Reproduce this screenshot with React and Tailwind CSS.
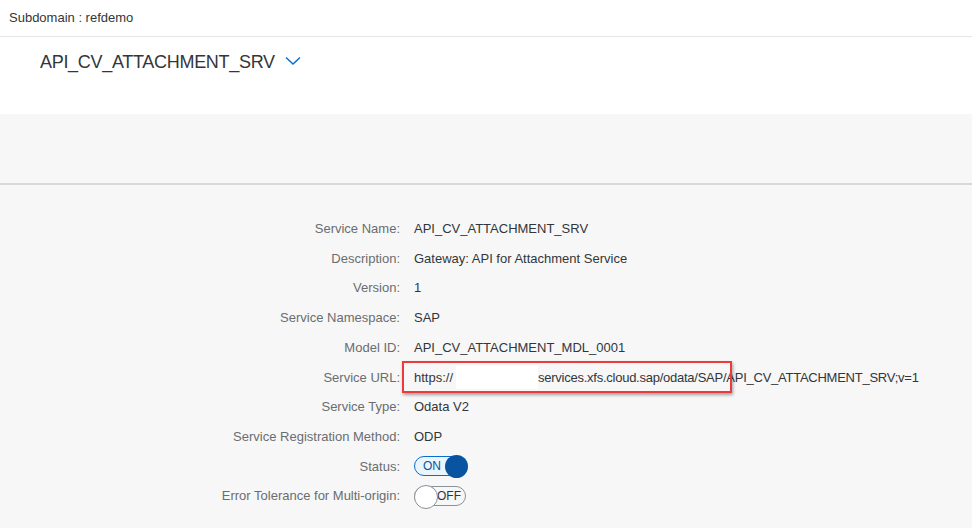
const rows = [
  { label: 'Service Name:', value: 'API_CV_ATTACHMENT_SRV' },
  { label: 'Description:', value: 'Gateway: API for Attachment Service' },
  { label: 'Version:', value: '1' },
  { label: 'Service Namespace:', value: 'SAP' },
  { label: 'Model ID:', value: 'API_CV_ATTACHMENT_MDL_0001' },
  { label: 'Service URL:', type: 'url' },
  { label: 'Service Type:', value: 'Odata V2' },
  { label: 'Service Registration Method:', value: 'ODP' },
  { label: 'Status:', type: 'on' },
  { label: 'Error Tolerance for Multi-origin:', type: 'off' },
];

const SwitchOn = () => (
  <div className="relative flex items-center w-[54px] h-[22px]">
    <div className="flex items-center w-[52px] h-[20px] rounded-full border border-[#0a6ed1] bg-[#ebf5fe] pl-[8px] text-[12px] text-[#0854a0]">
      ON
    </div>
    <div className="absolute right-0 top-0 w-[23px] h-[23px] rounded-full bg-[#0854a0]" />
  </div>
);

const SwitchOff = () => (
  <div className="relative flex items-center w-[54px] h-[23px]">
    <div className="flex items-center justify-end w-[52px] h-[20px] rounded-full border border-[#89919a] bg-[#f7f7f7] pr-[4px] text-[12px] text-[#32363a]">
      OFF
    </div>
    <div className="absolute left-0 top-0 w-[24px] h-[24px] rounded-full bg-white border border-[#89919a]" />
  </div>
);

const UrlValue = () => (
  <span className="relative flex items-center">
    <span>https://</span>
    <span className="inline-block w-[82px] h-[23px] bg-white ml-[3px]" />
    <span className="tracking-[-0.25px]">services.xfs.cloud.sap/odata/SAP/API_CV_ATTACHMENT_SRV;v=1</span>
    <span className="absolute left-[-12px] top-[-5px] w-[330px] h-[32px] border-2 border-[#ee3a3a] shadow-[1px_2px_3px_rgba(0,0,0,0.35)]" />
  </span>
);

export default function App() {
  return (
    <div
      className="w-[972px] h-[528px] overflow-hidden bg-[#f7f7f7] text-[#32363a]"
      style={{ fontFamily: '"Liberation Sans", Arial, sans-serif' }}
    >
      <div className="h-[37px] bg-white border-b border-[#e5e5e5] flex items-center px-[9px] text-[13px]">
        Subdomain : refdemo
      </div>
      <div className="h-[77px] bg-white flex items-start pl-[40px] pt-[12px]">
        <span className="text-[18px] tracking-[-0.3px]">API_CV_ATTACHMENT_SRV</span>
        <svg className="ml-[10px] mt-[7px]" width="16" height="10" viewBox="0 0 16 10">
          <path d="M1 1.5 L8 8 L15 1.5" fill="none" stroke="#0a6ed1" strokeWidth="1.5" />
        </svg>
      </div>
      <div className="h-[71px] border-b-2 border-[#d9d9d9]" />
      <div className="pt-[29px] grid grid-cols-[400px_1fr] gap-x-[14px] text-[13px]">
        {rows.map((r) => (
          <div key={r.label} className="contents">
            <div className="h-[29.7px] flex items-center justify-end text-[#6a6d70]">{r.label}</div>
            <div className="h-[29.7px] flex items-center">
              {r.type === 'url' ? <UrlValue /> : r.type === 'on' ? <SwitchOn /> : r.type === 'off' ? <SwitchOff /> : r.value}
            </div>
          </div>
        ))}
      </div>
    </div>
  );
}
